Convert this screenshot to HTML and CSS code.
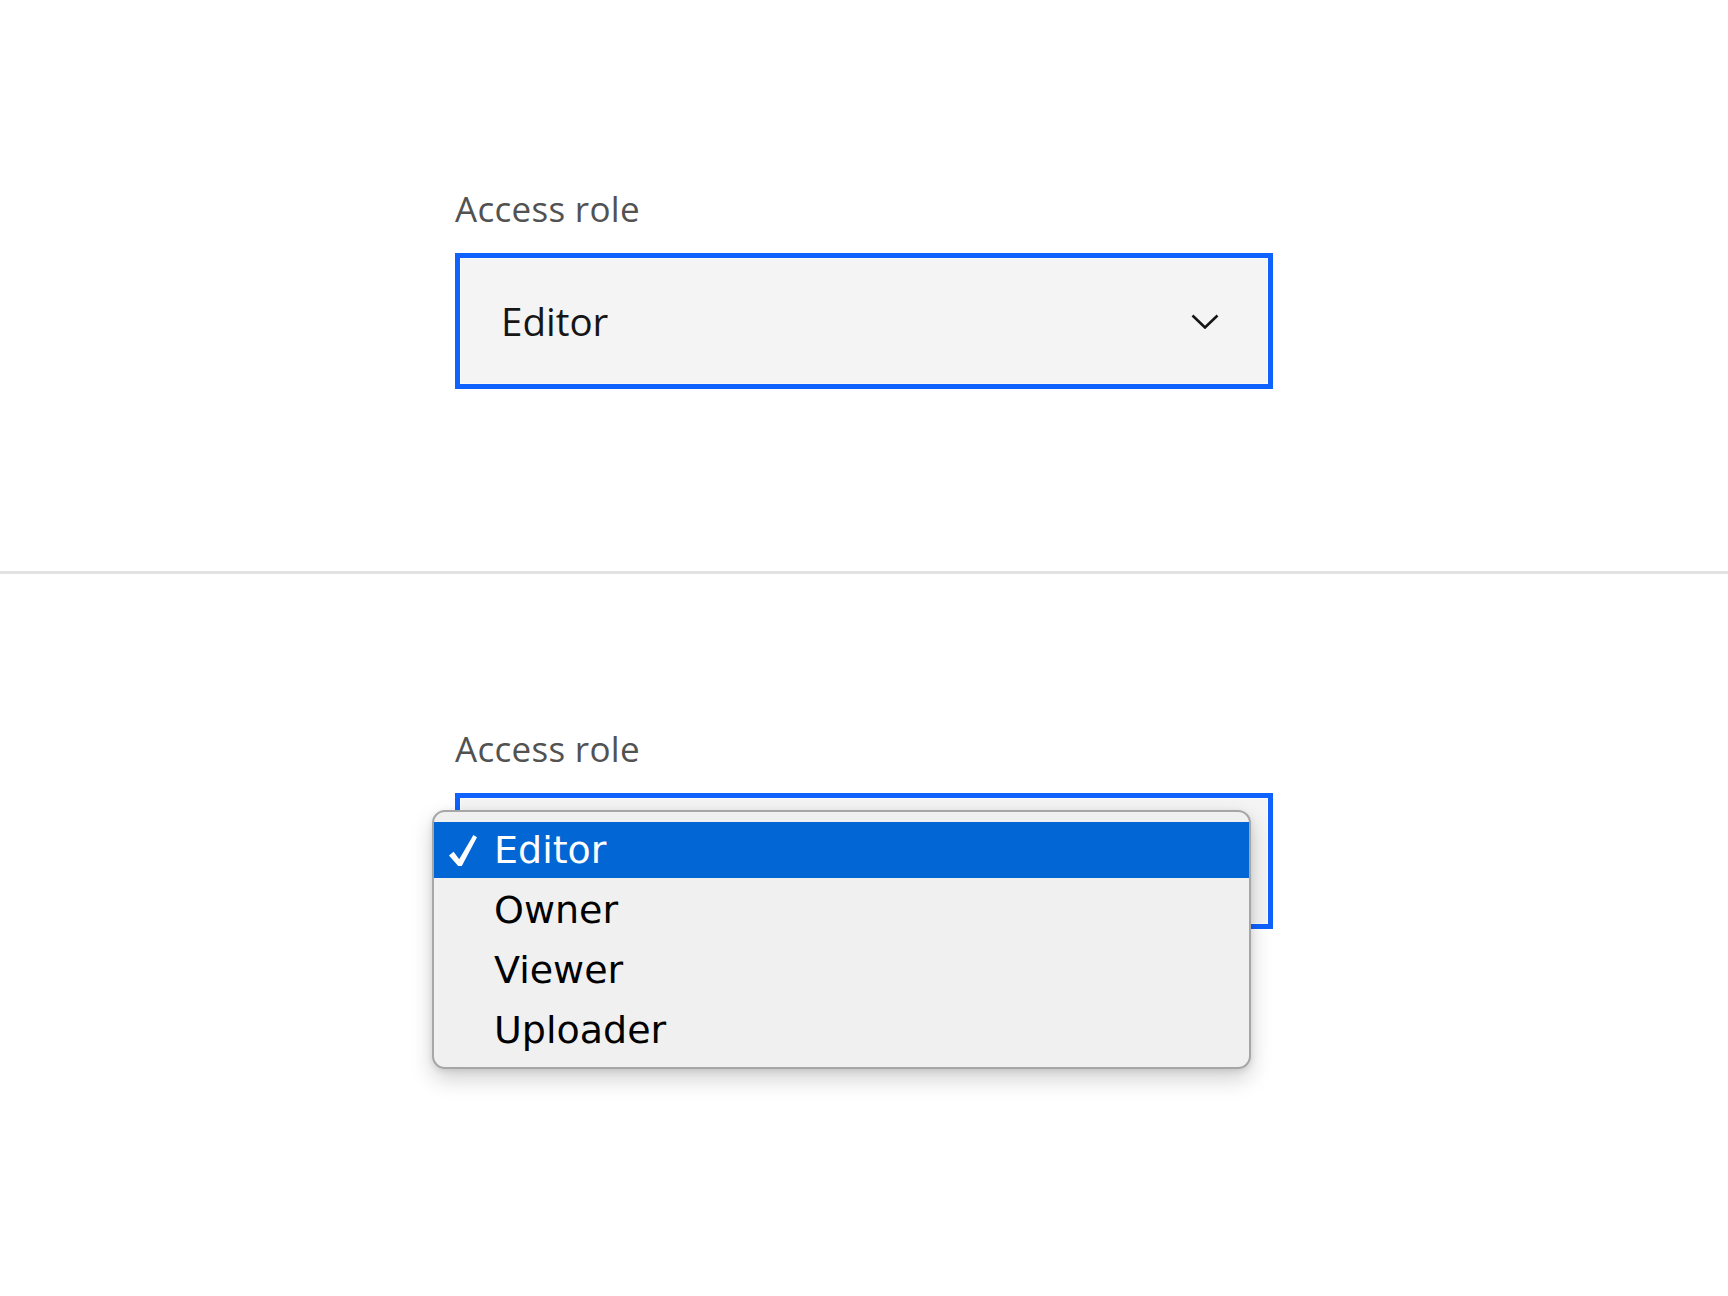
FILE: index.html
```html
<!DOCTYPE html>
<html lang="en">
<head>
<meta charset="utf-8">
<title>Access role select</title>
<link rel="stylesheet" href="styles.css">
</head>
<body>
<main class="page">
  <section class="demo demo--closed">
    <div class="field">
      <div class="label">Access role</div>
      <div class="select">
        <span class="value">Editor</span>
        <svg class="chevron" width="28" height="15" viewBox="0 0 28 15" aria-hidden="true"><polyline points="1.5,1.5 14,13.5 26.5,1.5" fill="none" stroke="#161616" stroke-width="2.6"/></svg>
      </div>
    </div>
  </section>
  <hr class="divider">
  <section class="demo demo--open">
    <div class="field">
      <div class="label">Access role</div>
      <div class="select-wrap">
        <div class="select select--open"></div>
        <ul class="menu">
          <li class="item item--selected">
            <svg class="check" width="28" height="31" viewBox="0 0 28 31" aria-hidden="true"><path d="M0 20.5 L4.6 16.8 L10.2 24.2 L24.4 0 L28 2.2 L12.8 31 L9.2 31 Z" fill="#ffffff"/></svg>
            Editor
          </li>
          <li class="item">Owner</li>
          <li class="item">Viewer</li>
          <li class="item">Uploader</li>
        </ul>
      </div>
    </div>
  </section>
</main>
</body>
</html>
```

FILE: styles.css
```css
html, body {
  margin: 0;
  padding: 0;
  background: #ffffff;
}

.page {
  width: 1728px;
  min-height: 1296px;
  font-family: "Open Sans", "Noto Sans", sans-serif;
}

.demo--closed {
  padding-top: 189px;
  padding-bottom: 182px;
}

.demo--open {
  padding-top: 155px;
}

.divider {
  display: block;
  border: 0;
  margin: 0;
  height: 3px;
  background: #e2e2e2;
}

.field {
  margin-left: 455px;
  width: 818px;
}

.label {
  font-size: 35px;
  line-height: 40px;
  color: #525252;
  margin-bottom: 24px;
  letter-spacing: 0.3px;
}

.select {
  box-sizing: border-box;
  height: 136px;
  border: 5px solid #0f62fe;
  background: #f4f4f4;
  box-shadow: inset 0 0 0 1px #fbfbfb;
  display: flex;
  align-items: center;
  justify-content: space-between;
  padding: 0 49px 0 41px;
}

.value {
  font-size: 38.5px;
  line-height: 48px;
  color: #161616;
}

.chevron {
  display: block;
  flex: none;
}

.select-wrap {
  position: relative;
}

.menu {
  position: absolute;
  left: -23px;
  top: 17px;
  box-sizing: border-box;
  width: 819px;
  margin: 0;
  padding: 8px 0 7px;
  list-style: none;
  background: #f0f0f0;
  border: 2px solid #a6a6a6;
  border-radius: 13px;
  box-shadow: 0 10px 22px rgba(0, 0, 0, 0.18), 0 2px 6px rgba(0, 0, 0, 0.1);
  font-family: "DejaVu Sans", "Liberation Sans", sans-serif;
}

.item {
  position: relative;
  box-sizing: border-box;
  height: 60px;
  line-height: 56px;
  padding-left: 60px;
  font-size: 38px;
  color: #000000;
  border-top: 2px solid transparent;
  border-bottom: 2px solid transparent;
}

.item--selected {
  background: #0266d4;
  background-clip: padding-box;
  color: #ffffff;
}

.check {
  position: absolute;
  left: 15px;
  top: 13px;
}
```
